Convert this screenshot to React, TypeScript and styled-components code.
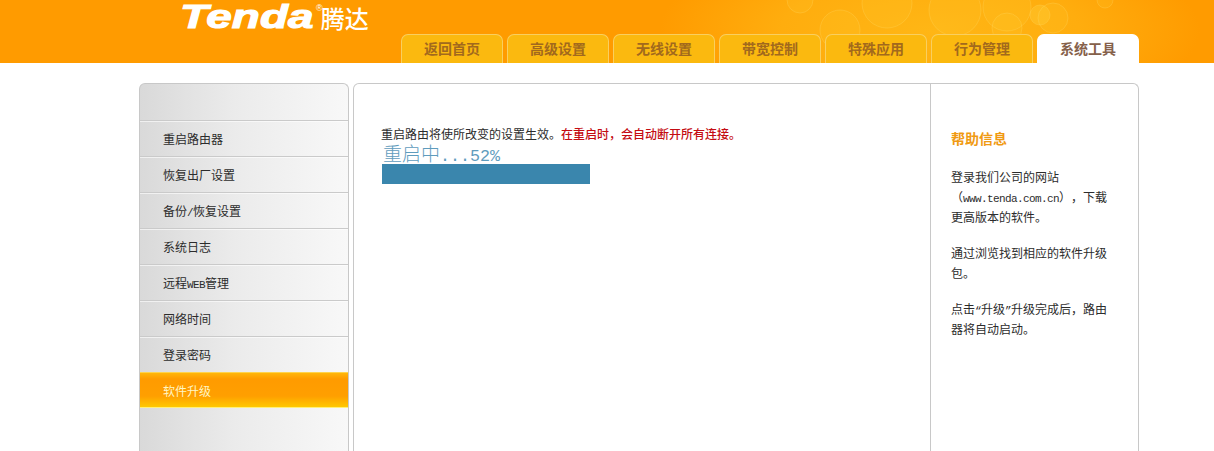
import styled, { createGlobalStyle } from "styled-components";

const GlobalStyle = createGlobalStyle`
  html, body {
    margin: 0;
    padding: 0;
    height: 100%;
    overflow: hidden;
    background: #fff;
  }
  body {
    font-family: "Noto Sans CJK SC", "Liberation Sans", sans-serif;
    font-size: 12px;
    color: #2c2c2c;
    text-spacing-trim: space-all;
  }
`;

const Header = styled.header`
  position: relative;
  height: 63px;
  overflow: hidden;
  background: radial-gradient(ellipse 270px 95px at 930px 30px, #ffb615 0%, #ffad0e 55%, #ff9b00 100%), #ff9b00;
`;

const HeaderInner = styled.div`
  position: relative;
  width: 1000px;
  height: 63px;
  margin-left: 139px;
  display: flex;
  justify-content: space-between;
  align-items: flex-end;
`;

const Bubbles = styled.svg`
  position: absolute;
  left: 760px;
  top: 0;
`;

const Logo = styled.div`
  position: absolute;
  left: 41px;
  top: -6px;
  display: flex;
  align-items: flex-start;
  color: #fff;
`;

const LogoWord = styled.span`
  font-family: "Liberation Sans", sans-serif;
  font-style: italic;
  font-weight: 700;
  font-size: 34px;
  line-height: 44px;
  display: inline-block;
  width: 136px;
  transform: scaleX(1.35);
  transform-origin: left top;
  -webkit-text-stroke: 1.1px #fff;
`;

const LogoMark = styled.span`
  font-family: "Liberation Sans", sans-serif;
  font-size: 9px;
  line-height: 10px;
  margin-top: 9px;
`;

const LogoCn = styled.span`
  font-size: 24px;
  font-weight: 500;
  line-height: 30px;
  margin: 9px 0 0 -2px;
`;

const TabBar = styled.nav`
  position: relative;
  margin-left: auto;
  display: flex;
  gap: 4px;
`;

const Tab = styled.a<{ $active?: boolean }>`
  width: 102px;
  height: 29px;
  box-sizing: border-box;
  padding-bottom: 2px;
  display: flex;
  align-items: center;
  justify-content: center;
  border-radius: 7px 7px 0 0;
  border: 1px solid ${(p) => (p.$active ? "#fff" : "#f9cf5f")};
  border-bottom: 0;
  background: ${(p) => (p.$active ? "#fff" : "#fbb90f")};
  color: ${(p) => (p.$active ? "#85604a" : "#a2691d")};
  font-size: 14px;
  font-weight: 700;
  line-height: 26px;
`;

const Page = styled.main`
  display: flex;
  gap: 4px;
  width: 1000px;
  margin: 20px 0 0 139px;
`;

const Sidebar = styled.aside`
  width: 210px;
  height: 368px;
  box-sizing: border-box;
  padding-top: 36px;
  border: 1px solid #c8c8c8;
  border-bottom: 0;
  border-radius: 6px 6px 0 0;
  background: linear-gradient(to right, #d9d9d9 0%, #ebebeb 45%, #f8f8f8 100%);
`;

const MenuItem = styled.a<{ $active?: boolean }>`
  display: block;
  height: 36px;
  box-sizing: border-box;
  padding-left: 23px;
  border-top: 1px solid ${(p) => (p.$active ? "#ffd34d" : "#cacaca")};
  border-bottom: ${(p) => (p.$active ? "1px solid #fff07c" : "0")};
  color: ${(p) => (p.$active ? "#fff6c4" : "#2c2c2c")};
  line-height: 35px;
  background: ${(p) =>
    p.$active
      ? "linear-gradient(to bottom, #ffb60a 0%, #ff9b00 18%, #ff9f00 68%, #ffc800 100%)"
      : "none"};
  box-shadow: ${(p) => (p.$active ? "none" : "inset 0 1px 0 rgba(255, 255, 255, 0.6)")};
`;

const Ascii = styled.span`
  font-family: "Liberation Mono", monospace;
  font-size: 11px;
  letter-spacing: -0.6px;
  line-height: 0;
`;

const Panel = styled.section`
  flex: 1;
  height: 368px;
  box-sizing: border-box;
  display: flex;
  border: 1px solid #c8c8c8;
  border-bottom: 0;
  border-radius: 6px 6px 0 0;
`;

const Content = styled.div`
  width: 576px;
  box-sizing: border-box;
  padding: 40px 0 0 27px;
`;

const Notice = styled.p`
  margin: 0;
  line-height: 20px;
  white-space: nowrap;
`;

const Warning = styled.span`
  color: #c40c12;
  font-weight: 500;
`;

const ProgressLabel = styled.div`
  height: 20px;
  padding-left: 2px;
  color: #5f9cbd;
  font-family: "Liberation Mono", monospace;
  font-size: 16.7px;
  line-height: 18px;
`;

const ProgressCn = styled.span`
  font-family: "Noto Sans CJK SC", sans-serif;
  font-size: 19px;
  font-weight: 300;
  line-height: 18px;
`;

const ProgressTrack = styled.div`
  width: 100%;
  height: 20px;
  margin-left: 1px;
`;

const ProgressFill = styled.div`
  height: 100%;
  background: #3a86ad;
`;

const Help = styled.aside`
  flex: 1;
  box-sizing: border-box;
  padding: 44px 28px 0 20px;
  border-left: 1px solid #c8c8c8;
`;

const HelpTitle = styled.h2`
  margin: 0 0 19px;
  color: #f09a12;
  font-size: 14px;
  font-weight: 700;
  line-height: 20px;
`;

const HelpText = styled.p`
  margin: 0 0 16px;
  line-height: 20px;
`;

const tabs = ["返回首页", "高级设置", "无线设置", "带宽控制", "特殊应用", "行为管理", "系统工具"];

const menu: React.ReactNode[] = [
  "重启路由器",
  "恢复出厂设置",
  <>备份<Ascii>/</Ascii>恢复设置</>,
  "系统日志",
  <>远程<Ascii>WEB</Ascii>管理</>,
  "网络时间",
  "登录密码",
  "软件升级",
];

// circles behind the tabs, read off the reference: cx, cy, r
const circles = [
  [40, 0, 13],
  [80, 30, 20],
  [127, 3, 25],
  [195, 10, 26],
  [247, 7, 24],
  [247, 28, 15],
  [280, 15, 10],
  [293, 18, 15],
  [345, 0, 8],
];

const PROGRESS = 37.9;

export default function App() {
  return (
    <>
      <GlobalStyle />
      <Header>
        <Bubbles width="360" height="63" viewBox="0 0 360 63">
          {circles.map(([cx, cy, r], i) => (
            <circle
              key={i}
              cx={cx}
              cy={cy}
              r={r}
              fill="#ffd23c"
              fillOpacity={i === 6 ? 0.35 : 0.14}
              stroke="#ffe27a"
              strokeOpacity="0.22"
            />
          ))}
        </Bubbles>
        <HeaderInner>
          <Logo>
            <LogoWord>Tenda</LogoWord>
            <LogoMark>®</LogoMark>
            <LogoCn>腾达</LogoCn>
          </Logo>
          <TabBar>
            {tabs.map((t, i) => (
              <Tab key={t} $active={i === tabs.length - 1}>{t}</Tab>
            ))}
          </TabBar>
        </HeaderInner>
      </Header>
      <Page>
        <Sidebar>
          {menu.map((m, i) => (
            <MenuItem key={i} $active={i === menu.length - 1}>{m}</MenuItem>
          ))}
        </Sidebar>
        <Panel>
          <Content>
            <Notice>
              重启路由将使所改变的设置生效。<Warning>在重启时，会自动断开所有连接。</Warning>
            </Notice>
            <ProgressLabel>
              <ProgressCn>重启中</ProgressCn>...52%
            </ProgressLabel>
            <ProgressTrack>
              <ProgressFill style={{ width: `${PROGRESS}%` }} />
            </ProgressTrack>
          </Content>
          <Help>
            <HelpTitle>帮助信息</HelpTitle>
            <HelpText>
              登录我们公司的网站（<Ascii>www.tenda.com.cn</Ascii>），下载更高版本的软件。
            </HelpText>
            <HelpText>通过浏览找到相应的软件升级包。</HelpText>
            <HelpText>点击<Ascii>“</Ascii>升级<Ascii>”</Ascii>升级完成后，路由器将自动启动。</HelpText>
          </Help>
        </Panel>
      </Page>
    </>
  );
}
